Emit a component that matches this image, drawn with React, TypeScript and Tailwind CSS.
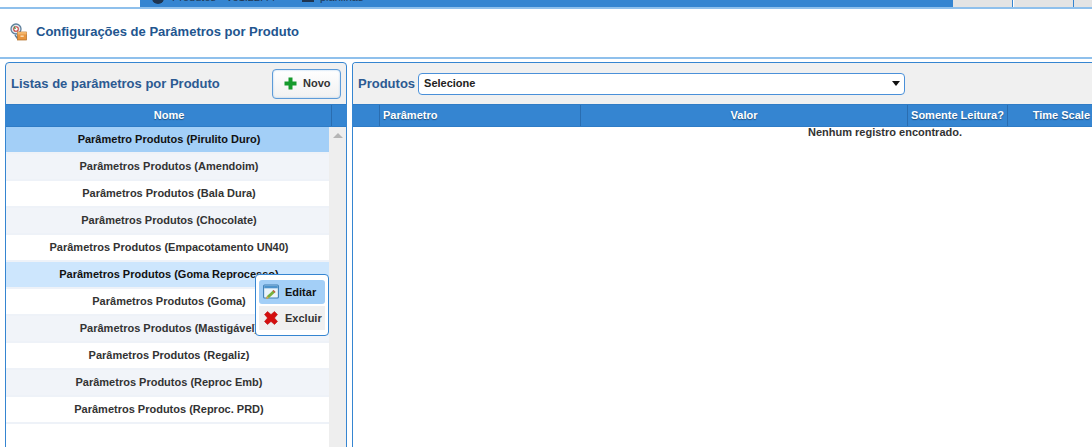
import React from 'react';

const rows = [
  { name: 'Parâmetro Produtos (Pirulito Duro)', kind: 'selected' },
  { name: 'Parâmetros Produtos (Amendoim)', kind: 'alt' },
  { name: 'Parâmetros Produtos (Bala Dura)', kind: 'plain' },
  { name: 'Parâmetros Produtos (Chocolate)', kind: 'alt' },
  { name: 'Parâmetros Produtos (Empacotamento UN40)', kind: 'plain' },
  { name: 'Parâmetros Produtos (Goma Reprocesso)', kind: 'hover' },
  { name: 'Parâmetros Produtos (Goma)', kind: 'plain' },
  { name: 'Parâmetros Produtos (Mastigável)', kind: 'alt' },
  { name: 'Parâmetros Produtos (Regaliz)', kind: 'plain' },
  { name: 'Parâmetros Produtos (Reproc Emb)', kind: 'alt' },
  { name: 'Parâmetros Produtos (Reproc. PRD)', kind: 'plain' },
];

function rowClass(kind: string) {
  if (kind === 'selected') return 'bg-[#a3cff7] text-[#111]';
  if (kind === 'hover') return 'bg-[#cde6fd] text-[#111]';
  if (kind === 'alt') return 'bg-[#f1f4f9] text-[#333]';
  return 'bg-white text-[#333]';
}

function PageIcon() {
  return (
    <svg width="17" height="18" viewBox="0 0 17 18" className="shrink-0">
      <circle cx="6" cy="6" r="5" fill="#e3e9ef" stroke="#5d7f9c" strokeWidth="1.3" />
      <circle cx="6" cy="6" r="2.3" fill="#fff" stroke="#c9423c" strokeWidth="1.1" />
      <path d="M3.5 1.5 L6 6 L4.5 6z" fill="#3f9a4a" />
      <path d="M5 12 L7.5 15.5" stroke="#5d7f9c" strokeWidth="1.5" />
      <rect x="7.5" y="9" width="9" height="8" fill="#e8953f" stroke="#b06a22" strokeWidth="0.7" />
      <rect x="7.5" y="9" width="9" height="2.4" fill="#f3b469" />
      <rect x="10.5" y="12.5" width="3.2" height="1.4" fill="#fde3bd" />
    </svg>
  );
}

function EditIcon() {
  return (
    <svg width="16" height="16" viewBox="0 0 16 16">
      <rect x="0.6" y="1" width="14.8" height="13" rx="1" fill="#eaf4fb" stroke="#3f7fb5" strokeWidth="1.1" />
      <rect x="1.2" y="1.5" width="13.6" height="2.8" fill="#4d93cc" />
      <path d="M3 15 L4 12 L10.5 6 L12.5 8 L6 14z" fill="#78b03c" />
      <path d="M3 15 L4 12 L6 14z" fill="#d9a05b" />
      <path d="M9.6 6.8 L10.5 6 L12.5 8 L11.6 8.8z" fill="#d8504a" />
    </svg>
  );
}

function DeleteIcon() {
  return (
    <svg width="14" height="14" viewBox="0 0 14 14">
      <path d="M0.5 3.5 L3.5 0.5 L7 3.5 L10.5 0.5 L13.5 3.5 L10.5 7 L13.5 10.5 L10.5 13.5 L7 10.5 L3.5 13.5 L0.5 10.5 L3.5 7z" fill="#d40f0f" stroke="#b30a0a" strokeWidth="0.5" />
    </svg>
  );
}

function PlusIcon() {
  return (
    <svg width="13" height="13" viewBox="0 0 13 13">
      <path d="M4.5 0.5 H8.5 V4.5 H12.5 V8.5 H8.5 V12.5 H4.5 V8.5 H0.5 V4.5 H4.5z" fill="#159a2c" />
    </svg>
  );
}

const headCell = 'flex items-center justify-center border-r border-[#2a6db0] h-full';

export default function App() {
  return (
    <div className="h-[447px] w-[1092px] overflow-hidden bg-white font-['Liberation_Sans',Arial,sans-serif] text-[11px] font-bold">
      {/* top bar, cut off by the window */}
      <div className="flex h-[9px] border-b-2 border-[#8fc0ec]">
        <div className="w-[140px]" />
        <div className="relative w-[813px] overflow-hidden bg-[#3585d1]">
          <span className="absolute left-[12px] top-[-8px] size-[12px] rounded-full bg-[#1f3550]" />
          <span className="absolute left-[32px] top-[-11px] text-[11px] font-normal text-[#1f3550]">Produtos - Ve1.22.44</span>
          <span className="absolute left-[162px] top-[-7px] h-[9px] w-[12px] bg-[#1f3550]" />
          <span className="absolute left-[180px] top-[-11px] text-[11px] font-normal text-[#1f3550]">planilhas</span>
        </div>
        <div className="w-[60px] border-r border-[#3585d1] bg-[#e4e4e4]" />
        <div className="ml-px w-[60px] border-r border-[#3585d1] bg-[#e4e4e4]" />
        <div className="flex-1 bg-[#e4e4e4]" />
      </div>

      {/* page title */}
      <div className="flex h-[50px] items-center gap-[9px] border-b-2 border-[#8fc0ec] pb-[2px] pl-[10px]">
        <PageIcon />
        <h1 className="text-[13px] font-bold text-[#22558f]">Configurações de Parâmetros por Produto</h1>
      </div>

      <div className="mt-[3px] flex gap-[5px] pl-[5px]">
        {/* left panel */}
        <section className="h-[400px] w-[342px] shrink-0 overflow-hidden rounded-t-[4px] border border-[#3585d1] bg-[#f0f0f0]">
          <div className="flex h-[41px] items-center justify-between pl-[5px] pr-[5px]">
            <h2 className="text-[13px] font-bold text-[#2c5a92]">Listas de parâmetros por Produto</h2>
            <button className="flex h-[30px] w-[69px] items-center gap-[6px] rounded-[4px] border border-[#5d9bd8] bg-gradient-to-b from-white to-[#f1f1f1] pl-[11px] text-[11px] font-bold text-[#333] shadow-[inset_0_0_2px_#9cc5ea]">
              <PlusIcon />
              Novo
            </button>
          </div>
          <div className="flex h-[23px] border-y border-[#2f7cc6] bg-[#3585d1] text-white [text-shadow:0_1px_1px_#1d4f80]">
            <div className={`${headCell} flex-1 pl-[1px]`}>Nome</div>
            <div className="w-[14px]" />
          </div>
          <div className="relative flex h-[340px]">
            <div className="flex-1 bg-white">
              {rows.map((row) => (
                <div
                  key={row.name}
                  className={`flex h-[27px] items-center justify-center border-b-2 border-[#eef2f8] pl-[3px] ${rowClass(row.kind)}`}
                >
                  {row.name}
                </div>
              ))}
            </div>
            <div className="flex w-[17px] justify-center bg-[#eeeeee] pt-[6px]">
              <span className="h-0 w-0 border-x-[5px] border-b-[5px] border-x-transparent border-b-[#b5b5b5]" />
            </div>
            {/* context menu */}
            <div className="absolute left-[249px] top-[147px] flex h-[62px] w-[74px] flex-col justify-center gap-[2px] rounded-[4px] border border-[#3585d1] bg-white pl-[3px] pr-[3px]">
              <div className="flex h-[24px] items-center gap-[6px] rounded-[3px] bg-[#a3cff7] pl-[4px] text-[#111]">
                <EditIcon />
                Editar
              </div>
              <div className="flex h-[24px] items-center gap-[7px] bg-[#f0f0f0] pl-[5px] text-[#333]">
                <DeleteIcon />
                Excluir
              </div>
            </div>
          </div>
        </section>

        {/* right panel */}
        <section className="h-[400px] flex-1 overflow-hidden rounded-tl-[4px] border-y border-l border-[#3585d1] bg-white">
          <div className="flex h-[41px] items-center gap-[3px] bg-[#f0f0f0] pl-[5px]">
            <h2 className="text-[13px] font-bold text-[#2c5a92]">Produtos</h2>
            <div className="flex h-[22px] w-[487px] items-center justify-between rounded-[4px] border border-[#4a90d9] bg-white pl-[5px] pr-[3px] text-[11px] text-[#222]">
              Selecione
              <span className="mr-[1px] h-0 w-0 border-x-[4px] border-t-[5px] border-x-transparent border-t-[#111]" />
            </div>
          </div>
          <div className="flex h-[23px] border-y border-[#2f7cc6] bg-[#3585d1] text-white [text-shadow:0_1px_1px_#1d4f80]">
            <div className={`${headCell} w-[27px]`} />
            <div className={`${headCell} w-[201px] !justify-start pl-[3px]`}>Parâmetro</div>
            <div className={`${headCell} w-[327px]`}>Valor</div>
            <div className={`${headCell} w-[100px]`}>Somente Leitura?</div>
            <div className="flex flex-1 items-center justify-end pr-[2px]">Time Scale</div>
          </div>
          <div className="w-[1064px] text-center leading-[10px] text-[#333]">Nenhum registro encontrado.</div>
        </section>
      </div>
    </div>
  );
}
